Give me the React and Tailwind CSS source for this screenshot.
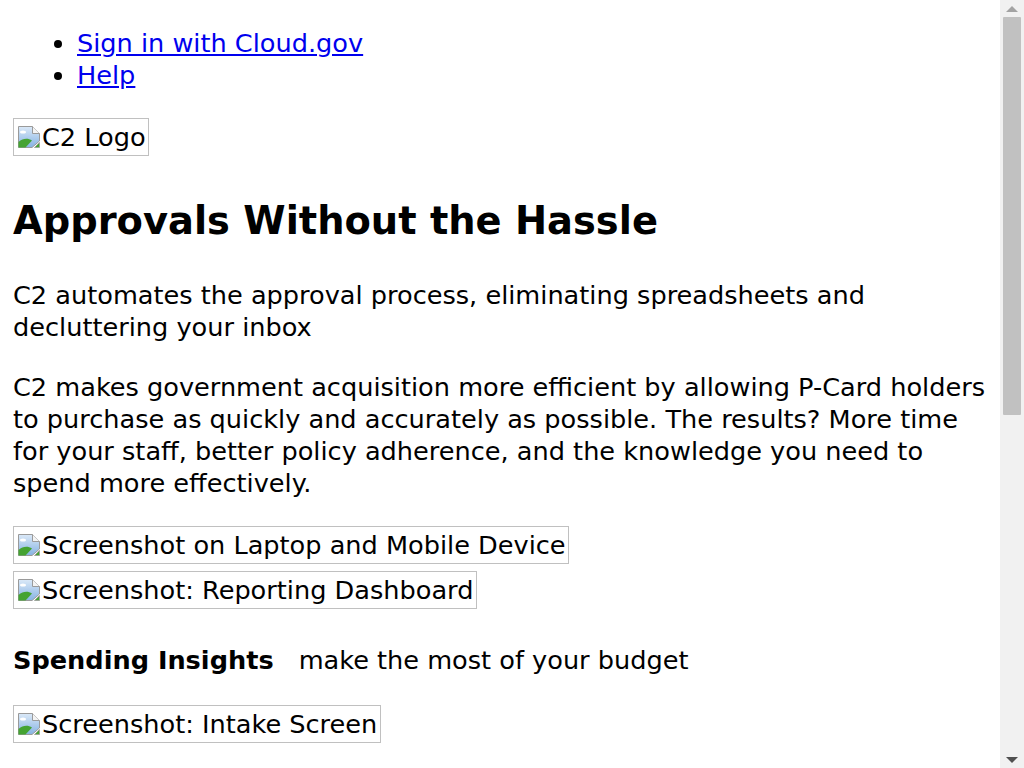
import React from 'react';

const BrokenImage = () => (
  <svg width="24" height="24" viewBox="0 0 24 24" className="shrink-0">
    <defs>
      <linearGradient id="sky" x1="0" y1="0" x2="0" y2="1">
        <stop offset="0" stopColor="#dbe9f8" />
        <stop offset="1" stopColor="#86b3e3" />
      </linearGradient>
    </defs>
    <path d="M1.5 1.5H15.5L22.5 8.5V16L15 22.5H1.5Z" fill="url(#sky)" stroke="#9a9a9a" />
    <path d="M15.5 1.5V8.5H22.5" fill="#f4f4f4" stroke="#9a9a9a" />
    <ellipse cx="6" cy="7" rx="3" ry="1.6" fill="#ffffff" />
    <path d="M1.5 22.5V17C6 13 11 13 15 15.5L8.5 22.5Z" fill="#45a332" />
    <path d="M22.5 17.5V22.5H17.5Z" fill="#45a332" stroke="#9a9a9a" strokeWidth="0.8" />
  </svg>
);

const AltImage = ({ alt, width, className = '' }) => (
  <div
    className={`flex h-[38px] items-center border border-[#c0c0c0] pl-[3px] ${className}`}
    style={{ width }}
  >
    <BrokenImage />
    <span className="pl-[1px] leading-[32px]">{alt}</span>
  </div>
);

const Scrollbar = () => (
  <div className="flex w-[24px] shrink-0 flex-col items-center bg-[#f1f1f1]">
    <div className="flex h-[17px] items-center justify-center">
      <div className="h-0 w-0 border-x-[6px] border-b-[6px] border-x-transparent border-b-[#a3a3a3]" />
    </div>
    <div className="h-[398px] w-[18px] rounded-[1px] bg-[#c1c1c1]" />
    <div className="flex-1" />
    <div className="flex h-[17px] items-center justify-center">
      <div className="h-0 w-0 border-x-[6px] border-t-[6px] border-x-transparent border-t-[#505050]" />
    </div>
  </div>
);

export default function App() {
  return (
    <div className="flex h-screen overflow-hidden bg-white text-black [font-family:'DejaVu_Sans',sans-serif]">
      <div className="flex-1 px-[13px] text-[25.6px] leading-[32px]">
        <ul className="list-disc pl-[64px] pt-[27px]">
          <li><a href="#" className="text-[#0000ee] underline">Sign in with Cloud.gov</a></li>
          <li><a href="#" className="text-[#0000ee] underline">Help</a></li>
        </ul>

        <AltImage alt="C2 Logo" width={136} className="mt-[27px]" />

        <h1 className="mt-[42px] text-[38.4px] font-bold leading-[45px]">Approvals Without the Hassle</h1>

        <p className="mt-[36px]">C2 automates the approval process, eliminating spreadsheets and decluttering your inbox</p>

        <p className="mt-[28px]">
          C2 makes government acquisition more efficient by allowing P-Card holders to purchase as quickly and
          accurately as possible. The results? More time for your staff, better policy adherence, and the knowledge
          you need to spend more effectively.
        </p>

        <AltImage alt="Screenshot on Laptop and Mobile Device" width={556} className="mt-[27px]" />
        <AltImage alt="Screenshot: Reporting Dashboard" width={464} className="mt-[7px]" />

        <div className="mt-[35px] flex gap-[25px]">
          <h3 className="font-bold">Spending Insights</h3>
          <p>make the most of your budget</p>
        </div>

        <AltImage alt="Screenshot: Intake Screen" width={368} className="mt-[29px]" />
      </div>
      <Scrollbar />
    </div>
  );
}
